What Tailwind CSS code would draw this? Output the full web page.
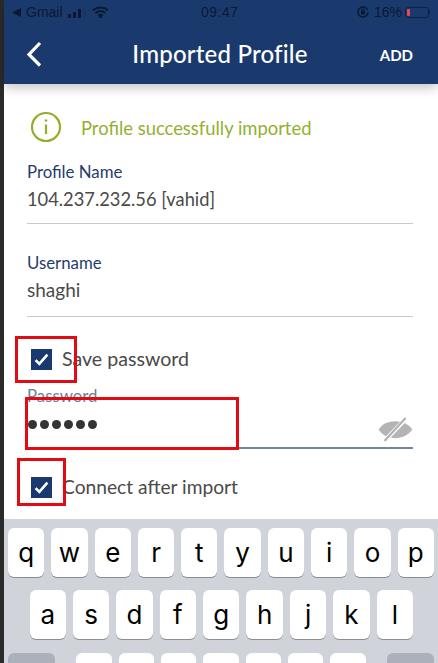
<!DOCTYPE html>
<html lang="en">
<head>
	<meta charset="UTF-8">
	<meta name="viewport" content="width=device-width, initial-scale=1.0">
	<title>Imported Profile</title>
	<script src="https://cdn.jsdelivr.net/npm/@tailwindcss/browser@4"></script>
</head>
<body class="bg-[#2b2b2b] font-['Lato',sans-serif] overflow-hidden">

<div class="relative w-[438px] h-[663px] overflow-hidden pl-[4px]">
	<div class="flex flex-col h-full bg-white">

		<!-- header -->
		<header class="bg-[#1a3a6e] h-[84px] shrink-0 shadow-[0_4px_10px_rgba(0,0,0,0.22)] relative z-10">
			<div class="relative flex items-center justify-between h-[24px] pl-[8px] pr-[8px] text-[#0b1830] text-[14px] font-['Liberation_Sans',sans-serif]">
				<div class="flex items-center gap-[5px]">
					<svg width="10" height="9" viewBox="0 0 10 9"><path d="M9 0v9L0 4.5z" fill="#0b1830"/></svg>
					<span class="-ml-[1px]">Gmail</span>
					<svg width="18" height="11" viewBox="0 0 18 11" fill="#0b1830"><rect x="0" y="7" width="3" height="4"/><rect x="5" y="5" width="3" height="6"/><rect x="10" y="2" width="3" height="9"/><rect x="15" y="0" width="3" height="11" opacity=".15"/></svg>
					<svg class="ml-[1px]" width="17" height="12" viewBox="0 0 17 12" fill="none" stroke="#0b1830" stroke-width="2"><path d="M1 4.2c4.4-3.6 10.6-3.6 15 0"/><path d="M3.6 7c2.9-2.3 6.9-2.3 9.8 0"/><path d="M6.2 9.6c1.4-1 3.2-1 4.6 0"/><circle cx="8.5" cy="11" r=".6" fill="#0b1830"/></svg>
				</div>
				<span class="absolute left-[197px] tracking-[0.5px]">09:47</span>
				<div class="flex items-center gap-[5px]">
					<svg width="12" height="12" viewBox="0 0 12 12" fill="none" stroke="#0b1830" stroke-width="1.5"><path d="M10.6 4A5 5 0 1 0 11 6"/><rect x="4" y="5" width="4" height="3.4" fill="#0b1830" stroke="none"/><path d="M4.8 5V4a1.2 1.2 0 0 1 2.4 0v1" stroke-width="1"/></svg>
					<span>16%</span>
					<div class="flex items-center -ml-[2px]">
						<div class="w-[24px] h-[11px] rounded-[3px] border border-[#0b1830]/70 p-[1px]">
							<div class="w-[3px] h-full bg-[#f0434a] rounded-[1px]"></div>
						</div>
						<div class="w-[1px] h-[4px] bg-[#0b1830]/70"></div>
					</div>
				</div>
			</div>
			<div class="relative flex items-center justify-center h-[60px] -mt-[1px] text-white">
				<svg class="absolute left-[21px] top-[18px]" width="18" height="26" viewBox="0 0 18 26" fill="none" stroke="#fff" stroke-width="3.2"><path d="M15 2 4 13.5 15 24.5"/></svg>
				<h1 class="text-[24px] font-medium mr-[2px] mt-[2px] tracking-[0.2px]">Imported Profile</h1>
				<span class="absolute right-[25px] top-[21px] text-[15px] font-bold">ADD</span>
			</div>
		</header>

		<!-- form -->
		<main class="flex-1 pl-[23px] pr-[25px] text-[#4a4a4a]">
			<div class="flex items-center gap-[10px] mt-[27px] h-[32px] text-[#93b02f]">
				<svg class="ml-[3px]" width="32" height="32" viewBox="0 0 32 32" fill="none" stroke="#93ae2b"><circle cx="16" cy="16" r="14" stroke-width="2.2"/><path d="M16 13.5V23" stroke-width="2.2"/><circle cx="16" cy="9.5" r="1.3" fill="#93ae2b" stroke="none"/></svg>
				<span class="text-[18.4px] ml-[9px] -mr-[2px] mt-[4px]">Profile successfully imported</span>
			</div>

			<div class="mt-[19px] border-b border-[#c9c9c9] h-[62px]">
				<div class="text-[16.8px] text-[#1f3c6e] leading-[20px]">Profile Name</div>
				<div class="text-[18.3px] leading-[26px] mt-[4px]">104.237.232.56 [vahid]</div>
			</div>

			<div class="mt-[29px] border-b border-[#c9c9c9] h-[64px]">
				<div class="text-[16.8px] text-[#1f3c6e] leading-[20px]">Username</div>
				<div class="text-[19px] leading-[26px] mt-[4px]">shaghi</div>
			</div>

			<div class="flex items-center gap-[10px] mt-[30px] h-[24px]">
				<div class="w-[21px] h-[21px] ml-[4px] bg-[#1a3a6e] flex items-center justify-center">
					<svg width="15" height="13" viewBox="0 0 14 12" fill="none" stroke="#fff" stroke-width="2.4"><path d="M1.5 6.5 5 10l7.5-8.5"/></svg>
				</div>
				<span class="text-[19.6px]">Save password</span>
			</div>

			<div class="relative mt-[15px] border-b-2 border-[#7585a3] h-[63px]">
				<div class="text-[16.8px] text-[#6f7f9c] leading-[20px]">Password</div>
				<div class="flex gap-[3px] mt-[14px] ml-[1px]">
					<i class="w-[9px] h-[9px] rounded-full bg-[#333]"></i><i class="w-[9px] h-[9px] rounded-full bg-[#333]"></i><i class="w-[9px] h-[9px] rounded-full bg-[#333]"></i><i class="w-[9px] h-[9px] rounded-full bg-[#333]"></i><i class="w-[9px] h-[9px] rounded-full bg-[#333]"></i><i class="w-[9px] h-[9px] rounded-full bg-[#333]"></i>
				</div>
				<svg class="absolute right-0 top-[31px]" width="35" height="25" viewBox="0 0 35 26"><path d="M0 13C6 2 27 1 35 13 27 25 7 25 0 13z" fill="#b4b4b4"/><path d="M6 25 29 1" stroke="#fff" stroke-width="4.5"/><path d="M6 25 28 1" stroke="#b4b4b4" stroke-width="2.4"/></svg>
			</div>

			<div class="flex items-center gap-[10px] mt-[26px] h-[24px]">
				<div class="w-[21px] h-[21px] ml-[4px] bg-[#1a3a6e] flex items-center justify-center">
					<svg width="15" height="13" viewBox="0 0 14 12" fill="none" stroke="#fff" stroke-width="2.4"><path d="M1.5 6.5 5 10l7.5-8.5"/></svg>
				</div>
				<span class="text-[19.2px]">Connect after import</span>
			</div>
		</main>

		<!-- keyboard -->
		<div class="bg-[#d0d3da] h-[144px] shrink-0 pt-[9px] px-[4px] font-['Inter',sans-serif] text-[26px] text-black">
			<div class="flex gap-[7px]">
				<div class="w-[36.4px] h-[49px] bg-white rounded-[6px] shadow-[0_1px_0_#8a8d94] flex items-center justify-center">q</div>
				<div class="w-[36.4px] h-[49px] bg-white rounded-[6px] shadow-[0_1px_0_#8a8d94] flex items-center justify-center">w</div>
				<div class="w-[36.4px] h-[49px] bg-white rounded-[6px] shadow-[0_1px_0_#8a8d94] flex items-center justify-center">e</div>
				<div class="w-[36.4px] h-[49px] bg-white rounded-[6px] shadow-[0_1px_0_#8a8d94] flex items-center justify-center">r</div>
				<div class="w-[36.4px] h-[49px] bg-white rounded-[6px] shadow-[0_1px_0_#8a8d94] flex items-center justify-center">t</div>
				<div class="w-[36.4px] h-[49px] bg-white rounded-[6px] shadow-[0_1px_0_#8a8d94] flex items-center justify-center">y</div>
				<div class="w-[36.4px] h-[49px] bg-white rounded-[6px] shadow-[0_1px_0_#8a8d94] flex items-center justify-center">u</div>
				<div class="w-[36.4px] h-[49px] bg-white rounded-[6px] shadow-[0_1px_0_#8a8d94] flex items-center justify-center">i</div>
				<div class="w-[36.4px] h-[49px] bg-white rounded-[6px] shadow-[0_1px_0_#8a8d94] flex items-center justify-center">o</div>
				<div class="w-[36.4px] h-[49px] bg-white rounded-[6px] shadow-[0_1px_0_#8a8d94] flex items-center justify-center">p</div>
			</div>
			<div class="flex gap-[7px] mt-[13px] pl-[21.5px]">
				<div class="w-[36.4px] h-[49px] bg-white rounded-[6px] shadow-[0_1px_0_#8a8d94] flex items-center justify-center">a</div>
				<div class="w-[36.4px] h-[49px] bg-white rounded-[6px] shadow-[0_1px_0_#8a8d94] flex items-center justify-center">s</div>
				<div class="w-[36.4px] h-[49px] bg-white rounded-[6px] shadow-[0_1px_0_#8a8d94] flex items-center justify-center">d</div>
				<div class="w-[36.4px] h-[49px] bg-white rounded-[6px] shadow-[0_1px_0_#8a8d94] flex items-center justify-center">f</div>
				<div class="w-[36.4px] h-[49px] bg-white rounded-[6px] shadow-[0_1px_0_#8a8d94] flex items-center justify-center">g</div>
				<div class="w-[36.4px] h-[49px] bg-white rounded-[6px] shadow-[0_1px_0_#8a8d94] flex items-center justify-center">h</div>
				<div class="w-[36.4px] h-[49px] bg-white rounded-[6px] shadow-[0_1px_0_#8a8d94] flex items-center justify-center">j</div>
				<div class="w-[36.4px] h-[49px] bg-white rounded-[6px] shadow-[0_1px_0_#8a8d94] flex items-center justify-center">k</div>
				<div class="w-[36.4px] h-[49px] bg-white rounded-[6px] shadow-[0_1px_0_#8a8d94] flex items-center justify-center">l</div>
			</div>
			<div class="flex gap-[7px] mt-[14px]">
				<div class="w-[48px] h-[49px] mr-[14.5px] bg-[#abb0bb] rounded-[6px]"></div>
				<div class="w-[36.4px] h-[49px] bg-white rounded-[6px]"></div>
				<div class="w-[36.4px] h-[49px] bg-white rounded-[6px]"></div>
				<div class="w-[36.4px] h-[49px] bg-white rounded-[6px]"></div>
				<div class="w-[36.4px] h-[49px] bg-white rounded-[6px]"></div>
				<div class="w-[36.4px] h-[49px] bg-white rounded-[6px]"></div>
				<div class="w-[36.4px] h-[49px] bg-white rounded-[6px]"></div>
				<div class="w-[36.4px] h-[49px] bg-white rounded-[6px]"></div>
				<div class="w-[48px] h-[49px] ml-[14.5px] bg-[#abb0bb] rounded-[6px]"></div>
			</div>
		</div>
	</div>

	<!-- red annotation boxes drawn over the screenshot -->
	<div class="absolute left-[15px] top-[336px] w-[62px] h-[47px] border-[3px] border-[#e30b13]"></div>
	<div class="absolute left-[25px] top-[397px] w-[214px] h-[53px] border-[3px] border-[#e30b13]"></div>
	<div class="absolute left-[17px] top-[458px] w-[49px] h-[48px] border-[3px] border-[#e30b13]"></div>
</div>

</body>
</html>
